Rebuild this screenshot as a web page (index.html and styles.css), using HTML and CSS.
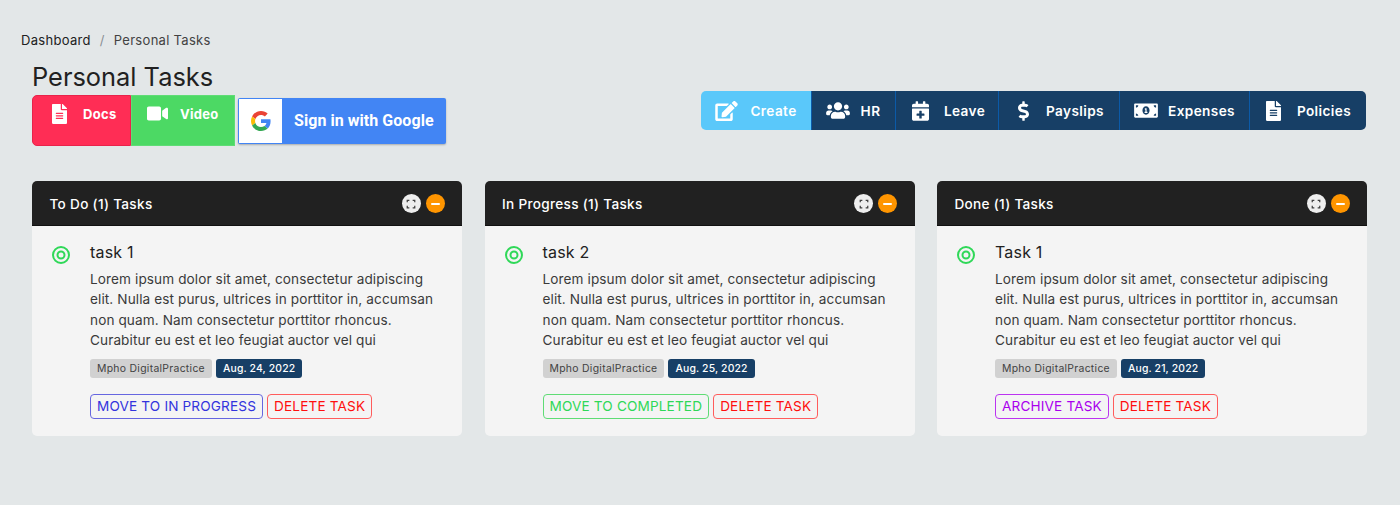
FILE: index.html
```html
<!DOCTYPE html>
<html lang="en">
<head>
    <meta charset="UTF-8">
    <title>Personal Tasks</title>
    <link rel="stylesheet" href="styles.css">
</head>
<body>
    <nav class="breadcrumb">
        <span class="crumb-link">Dashboard</span>
        <span class="crumb-sep">/</span>
        <span class="crumb-current">Personal Tasks</span>
    </nav>

    <div class="container">
        <div class="top-row">
            <div class="top-left">
                <h1>Personal Tasks</h1>
                <div class="left-actions">
                    <div class="btn-group">
                        <a class="btn-big btn-docs">
                            <svg class="icon-doc" viewBox="0 0 384 512"><path fill="currentColor" d="M224 136V0H24C10.7 0 0 10.7 0 24v464c0 13.3 10.7 24 24 24h336c13.3 0 24-10.7 24-24V160H248c-13.2 0-24-10.8-24-24zm64 236c0 6.6-5.4 12-12 12H108c-6.6 0-12-5.4-12-12v-8c0-6.6 5.4-12 12-12h168c6.6 0 12 5.4 12 12v8zm0-64c0 6.6-5.4 12-12 12H108c-6.6 0-12-5.4-12-12v-8c0-6.6 5.4-12 12-12h168c6.6 0 12 5.4 12 12v8zm0-72v8c0 6.6-5.4 12-12 12H108c-6.6 0-12-5.4-12-12v-8c0-6.6 5.4-12 12-12h168c6.6 0 12 5.4 12 12zm96-114.1v6.1H256V0h6.1c6.4 0 12.5 2.5 17 7l97.9 98c4.5 4.5 7 10.6 7 16.9z"/></svg>
                            Docs
                        </a>
                        <a class="btn-big btn-video">
                            <svg class="icon-video" viewBox="0 0 576 512"><path fill="currentColor" d="M336.2 64H47.8C21.4 64 0 85.4 0 111.8v288.4C0 426.6 21.4 448 47.8 448h288.4c26.4 0 47.8-21.4 47.8-47.8V111.8c0-26.4-21.4-47.8-47.8-47.8zm189.4 37.7L416 177.3v157.4l109.6 75.5c21.2 14.6 50.4-.3 50.4-25.8V127.5c0-25.4-29.1-40.4-50.4-25.8z"/></svg>
                            Video
                        </a>
                    </div>
                    <a class="google-btn">
                        <span class="google-icon">
                            <svg viewBox="0 0 48 48">
                                <path fill="#EA4335" d="M24 9.5c3.54 0 6.71 1.22 9.21 3.6l6.85-6.85C35.9 2.38 30.47 0 24 0 14.62 0 6.51 5.38 2.56 13.22l7.98 6.19C12.43 13.72 17.74 9.5 24 9.5z"/>
                                <path fill="#4285F4" d="M46.98 24.55c0-1.57-.15-3.09-.38-4.55H24v9.02h12.94c-.58 2.96-2.26 5.48-4.78 7.18l7.73 6c4.51-4.18 7.09-10.36 7.09-17.65z"/>
                                <path fill="#FBBC05" d="M10.53 28.59c-.48-1.45-.76-2.99-.76-4.59s.27-3.14.76-4.59l-7.98-6.19C.92 16.46 0 20.12 0 24c0 3.88.92 7.54 2.56 10.78l7.97-6.19z"/>
                                <path fill="#34A853" d="M24 48c6.48 0 11.93-2.13 15.89-5.81l-7.73-6c-2.15 1.45-4.92 2.3-8.16 2.3-6.26 0-11.57-4.22-13.47-9.91l-7.98 6.19C6.51 42.62 14.62 48 24 48z"/>
                            </svg>
                        </span>
                        <span class="google-text">Sign in with Google</span>
                    </a>
                </div>
            </div>

            <div class="quick-links">
                <a class="quick-link quick-create">
                    <svg class="icon-edit" viewBox="0 0 576 512"><path fill="currentColor" d="M402.6 83.2l90.2 90.2c3.8 3.8 3.8 10 0 13.8L274.4 405.6l-92.8 10.3c-12.4 1.4-22.9-9.1-21.5-21.5l10.3-92.8L388.8 83.2c3.8-3.8 10-3.8 13.8 0zm162-22.9l-48.8-48.8c-15.2-15.2-39.9-15.2-55.2 0l-35.4 35.4c-3.8 3.8-3.8 10 0 13.8l90.2 90.2c3.8 3.8 10 3.8 13.8 0l35.4-35.4c15.2-15.3 15.2-40 0-55.2zM384 346.2V448H64V128h229.8c3.2 0 6.2-1.3 8.5-3.5l40-40c7.6-7.6 2.2-20.5-8.5-20.5H48C21.5 64 0 85.5 0 112v352c0 26.5 21.5 48 48 48h352c26.5 0 48-21.5 48-48V306.2c0-10.7-12.9-16-20.5-8.5l-40 40c-2.2 2.3-3.5 5.3-3.5 8.5z"/></svg>
                    Create
                </a>
                <a class="quick-link quick-hr">
                    <svg class="icon-users" viewBox="0 0 640 512"><path fill="currentColor" d="M96 224c35.3 0 64-28.7 64-64s-28.7-64-64-64-64 28.7-64 64 28.7 64 64 64zm448 0c35.3 0 64-28.7 64-64s-28.7-64-64-64-64 28.7-64 64 28.7 64 64 64zm32 32h-64c-17.6 0-33.5 7.1-45.1 18.6 40.3 22.1 68.9 62 75.1 109.4h66c17.7 0 32-14.3 32-32v-32c0-35.3-28.7-64-64-64zm-256 0c61.9 0 112-50.1 112-112S381.9 32 320 32 208 82.1 208 144s50.1 112 112 112zm76.8 32h-8.3c-20.8 10-43.9 16-68.5 16s-47.6-6-68.5-16h-8.3C179.6 288 128 339.6 128 403.2V432c0 26.5 21.5 48 48 48h288c26.5 0 48-21.5 48-48v-28.8c0-63.6-51.6-115.2-115.2-115.2zm-223.7-13.4C161.5 263.1 145.6 256 128 256H64c-35.3 0-64 28.7-64 64v32c0 17.7 14.3 32 32 32h65.9c6.3-47.4 34.9-87.3 75.2-109.4z"/></svg>
                    HR
                </a>
                <a class="quick-link quick-leave">
                    <svg class="icon-cal" viewBox="0 0 448 512"><path fill="currentColor" d="M436 160H12c-6.6 0-12-5.4-12-12v-36c0-26.5 21.5-48 48-48h48V12c0-6.6 5.4-12 12-12h40c6.6 0 12 5.4 12 12v52h128V12c0-6.6 5.4-12 12-12h40c6.6 0 12 5.4 12 12v52h48c26.5 0 48 21.5 48 48v36c0 6.6-5.4 12-12 12zM12 192h424c6.6 0 12 5.4 12 12v260c0 26.5-21.5 48-48 48H48c-26.5 0-48-21.5-48-48V204c0-6.6 5.4-12 12-12zm316 140c0-6.6-5.4-12-12-12h-60v-60c0-6.6-5.4-12-12-12h-40c-6.6 0-12 5.4-12 12v60h-60c-6.6 0-12 5.4-12 12v40c0 6.6 5.4 12 12 12h60v60c0 6.6 5.4 12 12 12h40c6.6 0 12-5.4 12-12v-60h60c6.6 0 12-5.4 12-12v-40z"/></svg>
                    Leave
                </a>
                <a class="quick-link quick-payslips">
                    <svg class="icon-dollar" viewBox="0 0 288 512"><path fill="currentColor" d="M209.2 233.4l-108-31.6C88.7 198.2 80 186.5 80 173.5c0-16.3 13.2-29.5 29.5-29.5h66.3c12.2 0 24.2 3.7 34.2 10.5 6.1 4.1 14.3 3.1 19.5-2l34.8-34c7.1-6.9 6.1-18.4-1.8-24.5C238 74.8 207.4 64.1 176 64V16c0-8.8-7.2-16-16-16h-32c-8.8 0-16 7.2-16 16v48h-2.5C45.8 64-5.4 118.7.5 183.6c4.2 46.1 39.4 83.6 83.8 96.6l102.5 30c12.5 3.7 21.2 15.3 21.2 28.3 0 16.3-13.2 29.5-29.5 29.5h-66.3C100 368 88 364.3 78 357.5c-6.1-4.1-14.3-3.1-19.5 2l-34.8 34c-7.1 6.9-6.1 18.4 1.8 24.5 24.5 19.2 55.1 29.9 86.5 30v48c0 8.8 7.2 16 16 16h32c8.8 0 16-7.2 16-16v-48.2c46.6-.9 90.3-28.6 105.7-72.7 21.5-61.6-14.6-124.8-72.5-141.7z"/></svg>
                    Payslips
                </a>
                <a class="quick-link quick-expenses">
                    <svg class="icon-money" viewBox="0 0 640 512"><path fill="currentColor" d="M352 288h-16v-88c0-4.42-3.58-8-8-8h-13.58c-4.74 0-9.37 1.4-13.31 4.03l-15.33 10.22a7.994 7.994 0 0 0-2.22 11.09l8.88 13.31a7.994 7.994 0 0 0 11.09 2.22l.47-.31V288h-16c-4.42 0-8 3.58-8 8v16c0 4.42 3.58 8 8 8h64c4.42 0 8-3.58 8-8v-16c0-4.42-3.58-8-8-8zM608 64H32C14.33 64 0 78.33 0 96v320c0 17.67 14.33 32 32 32h576c17.67 0 32-14.33 32-32V96c0-17.67-14.33-32-32-32zM48 400v-64c35.35 0 64 28.65 64 64H48zm0-224v-64h64c0 35.35-28.65 64-64 64zm272 192c-53 0-96-50.15-96-112 0-61.86 43-112 96-112s96 50.14 96 112c0 61.87-43.02 112-96 112zm272 32h-64c0-35.35 28.65-64 64-64v64zm0-224c-35.35 0-64-28.65-64-64h64v64z"/></svg>
                    Expenses
                </a>
                <a class="quick-link quick-policies">
                    <svg class="icon-doc-small" viewBox="0 0 384 512"><path fill="currentColor" d="M224 136V0H24C10.7 0 0 10.7 0 24v464c0 13.3 10.7 24 24 24h336c13.3 0 24-10.7 24-24V160H248c-13.2 0-24-10.8-24-24zm64 236c0 6.6-5.4 12-12 12H108c-6.6 0-12-5.4-12-12v-8c0-6.6 5.4-12 12-12h168c6.6 0 12 5.4 12 12v8zm0-64c0 6.6-5.4 12-12 12H108c-6.6 0-12-5.4-12-12v-8c0-6.6 5.4-12 12-12h168c6.6 0 12 5.4 12 12v8zm0-72v8c0 6.6-5.4 12-12 12H108c-6.6 0-12-5.4-12-12v-8c0-6.6 5.4-12 12-12h168c6.6 0 12 5.4 12 12zm96-114.1v6.1H256V0h6.1c6.4 0 12.5 2.5 17 7l97.9 98c4.5 4.5 7 10.6 7 16.9z"/></svg>
                    Policies
                </a>
            </div>
        </div>

        <div class="board">
            <!-- To Do -->
            <section class="card">
                <header class="card-header">
                    <h2>To Do (1) Tasks</h2>
                    <div class="card-tools">
                        <span class="tool tool-expand"><svg viewBox="0 0 12 12"><path d="M1.5 4V1.5H4M8 1.5h2.5V4M10.5 8v2.5H8M4 10.5H1.5V8"/></svg></span>
                        <span class="tool tool-min"><span class="minus"></span></span>
                    </div>
                </header>
                <div class="card-body">
                    <svg class="task-dot" viewBox="0 0 20 20"><circle cx="10" cy="10" r="8"/><circle cx="10" cy="10" r="3.5"/></svg>
                    <div class="task">
                        <h3>task 1</h3>
                        <p>Lorem ipsum dolor sit amet, consectetur adipiscing elit. Nulla est purus, ultrices in porttitor in, accumsan non quam. Nam consectetur porttitor rhoncus. Curabitur eu est et leo feugiat auctor vel qui</p>
                        <div class="badges">
                            <span class="badge badge-user">Mpho DigitalPractice</span>
                            <span class="badge badge-date">Aug. 24, 2022</span>
                        </div>
                        <div class="task-actions">
                            <a class="btn-outline btn-indigo">MOVE TO IN PROGRESS</a>
                            <a class="btn-outline btn-red">DELETE TASK</a>
                        </div>
                    </div>
                </div>
            </section>

            <!-- In Progress -->
            <section class="card">
                <header class="card-header">
                    <h2>In Progress (1) Tasks</h2>
                    <div class="card-tools">
                        <span class="tool tool-expand"><svg viewBox="0 0 12 12"><path d="M1.5 4V1.5H4M8 1.5h2.5V4M10.5 8v2.5H8M4 10.5H1.5V8"/></svg></span>
                        <span class="tool tool-min"><span class="minus"></span></span>
                    </div>
                </header>
                <div class="card-body">
                    <svg class="task-dot" viewBox="0 0 20 20"><circle cx="10" cy="10" r="8"/><circle cx="10" cy="10" r="3.5"/></svg>
                    <div class="task">
                        <h3>task 2</h3>
                        <p>Lorem ipsum dolor sit amet, consectetur adipiscing elit. Nulla est purus, ultrices in porttitor in, accumsan non quam. Nam consectetur porttitor rhoncus. Curabitur eu est et leo feugiat auctor vel qui</p>
                        <div class="badges">
                            <span class="badge badge-user">Mpho DigitalPractice</span>
                            <span class="badge badge-date">Aug. 25, 2022</span>
                        </div>
                        <div class="task-actions">
                            <a class="btn-outline btn-green">MOVE TO COMPLETED</a>
                            <a class="btn-outline btn-red">DELETE TASK</a>
                        </div>
                    </div>
                </div>
            </section>

            <!-- Done -->
            <section class="card">
                <header class="card-header">
                    <h2>Done (1) Tasks</h2>
                    <div class="card-tools">
                        <span class="tool tool-expand"><svg viewBox="0 0 12 12"><path d="M1.5 4V1.5H4M8 1.5h2.5V4M10.5 8v2.5H8M4 10.5H1.5V8"/></svg></span>
                        <span class="tool tool-min"><span class="minus"></span></span>
                    </div>
                </header>
                <div class="card-body">
                    <svg class="task-dot" viewBox="0 0 20 20"><circle cx="10" cy="10" r="8"/><circle cx="10" cy="10" r="3.5"/></svg>
                    <div class="task">
                        <h3>Task 1</h3>
                        <p>Lorem ipsum dolor sit amet, consectetur adipiscing elit. Nulla est purus, ultrices in porttitor in, accumsan non quam. Nam consectetur porttitor rhoncus. Curabitur eu est et leo feugiat auctor vel qui</p>
                        <div class="badges">
                            <span class="badge badge-user">Mpho DigitalPractice</span>
                            <span class="badge badge-date">Aug. 21, 2022</span>
                        </div>
                        <div class="task-actions">
                            <a class="btn-outline btn-purple">ARCHIVE TASK</a>
                            <a class="btn-outline btn-red">DELETE TASK</a>
                        </div>
                    </div>
                </div>
            </section>
        </div>
    </div>
</body>
</html>
```

FILE: styles.css
```css
/* Basic Reset */
* {
    margin: 0;
    padding: 0;
    box-sizing: border-box;
}

/* Global Styles */
body {
    font-family: 'Inter', 'Liberation Sans', sans-serif;
    background-color: #e3e7e8;
    color: #212121;
    overflow: hidden;
}

/* Breadcrumb */
.breadcrumb {
    display: flex;
    align-items: center;
    height: 20px;
    margin: 30px 0 0 21px;
    font-size: 13px;
    letter-spacing: 0.3px;
}

.crumb-link {
    color: #212121;
}

.crumb-sep {
    margin: 0 9px;
    color: #8a8f94;
}

.crumb-current {
    color: #424242;
}

.container {
    padding: 0 33px 0 32px;
}

.top-row {
    display: flex;
    justify-content: space-between;
    align-items: flex-start;
}

h1 {
    margin-top: 10px;
    font-size: 25.4px;
    font-weight: 400;
    line-height: 34px;
    height: 35px;
}

/* Left Buttons */
.left-actions {
    display: flex;
    align-items: center;
}

.btn-group {
    display: flex;
    height: 51px;
}

.btn-big {
    display: flex;
    align-items: flex-start;
    padding-top: 8px;
    color: #fff;
    font-size: 13px;
    font-weight: 700;
    line-height: 20px;
    letter-spacing: 0.3px;
}

.btn-docs {
    width: 99px;
    padding-left: 19px;
    background-color: #ff2d55;
    border: 1px solid #e8234a;
    border-radius: 5px 0 0 5px;
}

.btn-video {
    width: 104px;
    padding-left: 15px;
    background-color: #4cd964;
    border: 1px solid #5fdc75;
}

.icon-doc {
    width: 15px;
    height: 20px;
    margin-right: 16px;
}

.icon-video {
    width: 21px;
    height: 19px;
    margin-right: 12px;
}

.google-btn {
    display: flex;
    align-items: center;
    width: 208px;
    height: 46px;
    margin-left: 3px;
    background-color: #4285f4;
    border-radius: 2px;
    box-shadow: 0 1px 2px rgba(0, 0, 0, 0.25);
}

.google-icon {
    display: flex;
    align-items: center;
    justify-content: center;
    width: 43px;
    height: 44px;
    margin-left: 1px;
    background-color: #fff;
}

.google-icon svg {
    width: 20px;
    height: 20px;
}

.google-text {
    margin-left: 12px;
    font-family: 'Roboto', sans-serif;
    font-size: 16px;
    font-weight: 700;
    letter-spacing: 0.05px;
    color: #fff;
}

/* Quick Links */
.quick-links {
    display: flex;
    height: 39px;
    margin: 41px 1px 0 0;
}

.quick-link {
    display: flex;
    align-items: center;
    justify-content: center;
    background-color: #173f66;
    border-left: 1px solid #0b5aa8;
    color: #fff;
    font-size: 13.6px;
    font-weight: 600;
    letter-spacing: 0.4px;
}

.quick-create {
    width: 110px;
    background-color: #5ac8fa;
    border-left: none;
    border-radius: 5px 0 0 5px;
}

.quick-hr {
    width: 84px;
    padding-right: 1px;
}

.quick-leave {
    width: 103px;
    padding-left: 3px;
}

.quick-payslips {
    width: 121px;
    padding-left: 4px;
}

.quick-expenses { width: 130px; }

.quick-policies {
    width: 117px;
    padding-left: 1px;
    border-radius: 0 5px 5px 0;
}

.icon-edit {
    width: 23px;
    height: 20px;
    margin-right: 12px;
}

.icon-users {
    width: 24px;
    height: 19px;
    margin-right: 11px;
}

.icon-cal {
    width: 17px;
    height: 20px;
    margin-right: 15px;
}

.icon-dollar {
    width: 11px;
    height: 20px;
    margin-right: 17px;
}

.icon-money {
    width: 24px;
    height: 19px;
    margin-right: 10px;
}

.icon-doc-small {
    width: 15px;
    height: 20px;
    margin-right: 16px;
}

/* Task Board */
.board {
    display: grid;
    grid-template-columns: repeat(3, 430px);
    justify-content: space-between;
    margin-top: 35px;
}

.card {
    height: 255px;
    background-color: #f4f4f4;
    border-radius: 5px;
    overflow: hidden;
}

.card-header {
    display: flex;
    align-items: center;
    justify-content: space-between;
    height: 45px;
    padding: 1px 17.5px 0 17.5px;
    background-color: #212121;
    border-bottom: 1px solid #111;
}

.card-header h2 {
    font-size: 13.6px;
    font-weight: 500;
    letter-spacing: 0.3px;
    color: #fff;
}

.card-tools {
    display: flex;
    gap: 5px;
}

.tool {
    display: flex;
    align-items: center;
    justify-content: center;
    width: 19px;
    height: 19px;
    border-radius: 50%;
}

.tool-expand {
    background-color: #eeeeee;
}

.tool-expand svg {
    width: 10px;
    height: 10px;
    fill: none;
    stroke: #424242;
    stroke-width: 1.5;
}

.tool-min {
    background-color: #ff9500;
}

.minus {
    width: 9px;
    height: 2px;
    background-color: #fff;
    border-radius: 1px;
}

.card-body {
    display: flex;
    padding: 17px 18px 0 19px;
}

.task-dot {
    flex: none;
    width: 20px;
    height: 20px;
    margin: 2px 19px 0 0;
    fill: none;
    stroke: #2fd858;
    stroke-width: 2;
}

.task h3 {
    font-size: 16px;
    font-weight: 400;
    line-height: 19px;
    letter-spacing: 0.2px;
    color: #212121;
}

.task p {
    margin-top: 7px;
    font-size: 13.6px;
    line-height: 20.4px;
    letter-spacing: 0.1px;
    color: #3a3a3a;
}

/* Badges */
.badges {
    display: flex;
    gap: 4px;
    margin-top: 8px;
}

.badge {
    display: flex;
    align-items: center;
    height: 19px;
    padding: 0 7px;
    border-radius: 3px;
    font-size: 10.4px;
}

.badge-user {
    background-color: #d1d1d1;
    color: #424242;
    letter-spacing: 0.3px;
}

.badge-date {
    background-color: #173f66;
    color: #fff;
    font-weight: 500;
    letter-spacing: 0.15px;
}

/* Task Buttons */
.task-actions {
    display: flex;
    gap: 4px;
    margin-top: 16px;
}

.btn-outline {
    display: flex;
    align-items: center;
    height: 25px;
    padding: 0 6px;
    border: 1px solid;
    border-radius: 4px;
    font-size: 13.6px;
    letter-spacing: 0.15px;
}

.btn-indigo {
    color: #3333dd;
    border-color: #6666e0;
}

.btn-red {
    color: #ff0f0f;
    border-color: #ff5c5c;
}

.btn-green {
    color: #2fd858;
    border-color: #5fdc75;
}

.btn-purple {
    color: #aa00ee;
    border-color: #bb33f0;
}
```
